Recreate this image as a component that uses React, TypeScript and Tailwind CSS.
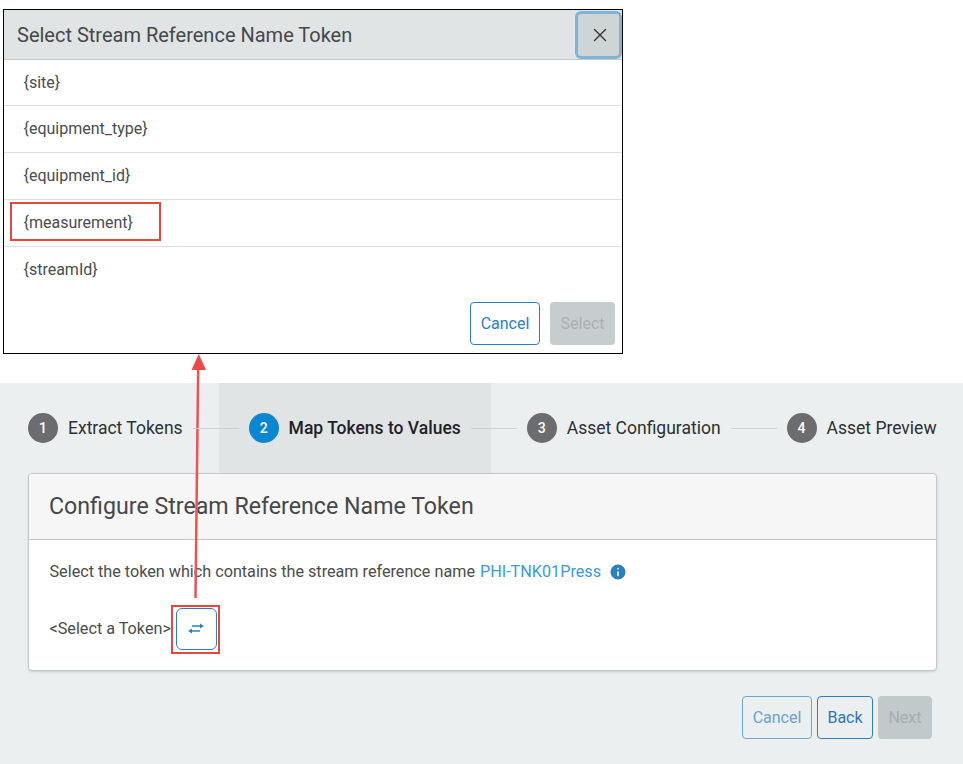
import React from 'react';
import { X, Info } from 'lucide-react';

const tokens = ['{site}', '{equipment_type}', '{equipment_id}', '{measurement}', '{streamId}'];

const steps = [
  { n: 1, label: 'Extract Tokens' },
  { n: 2, label: 'Map Tokens to Values', active: true },
  { n: 3, label: 'Asset Configuration' },
  { n: 4, label: 'Asset Preview' },
];

const SwapIcon = () => (
  <svg width="16" height="11" viewBox="0 0 16 11" fill="none" stroke="#2a80bd" strokeWidth="1.5" className="mb-[2px]">
    <path d="M4 3H13" />
    <path d="M12 0.4L15.8 3L12 5.6Z" fill="#2a80bd" stroke="none" />
    <path d="M3 8H12" />
    <path d="M4 5.4L0.2 8L4 10.6Z" fill="#2a80bd" stroke="none" />
  </svg>
);

const Stepper = () => (
  <div className="flex h-[90px] items-center pl-7">
    {steps.map((s, i) => (
      <React.Fragment key={s.n}>
        {i === 1 && <div className="relative z-10 ml-2.5 mr-[-20px] h-px w-[46px] bg-[#ccd1d3]" />}
        {i === 2 && <div className="relative z-10 ml-[-20px] mr-2.5 h-px w-[46px] bg-[#ccd1d3]" />}
        {i === 3 && <div className="mx-2.5 h-px w-[46px] bg-[#ccd1d3]" />}
        <div className={`flex h-[90px] items-center gap-2.5 ${s.active ? 'bg-[#e1e4e5] px-[30px]' : ''}`}>
          <span className={`flex h-[30px] w-[30px] items-center justify-center rounded-full text-[14px] font-medium text-white ${s.active ? 'bg-[#0a87d0]' : 'bg-[#6b6c6e]'}`}>
            {s.n}
          </span>
          <span className={`text-[17.5px] whitespace-nowrap ${s.active ? 'font-medium text-[#1f2125]' : 'text-[#2c2f33]'}`}>{s.label}</span>
        </div>
      </React.Fragment>
    ))}
  </div>
);

export default function App() {
  return (
    <div className="relative h-[764px] w-[963px] overflow-hidden bg-white font-['Roboto',sans-serif] text-[#4a4c4e]">
      <div className="h-[383px] pl-[3px] pt-[9px]">
        <div className="h-[345px] w-[620px] border border-black bg-white">
          <div className="flex h-[50px] items-center justify-between border-b border-[#c3c8ca] bg-[#e1e4e5] pl-[13px]">
            <h2 className="text-[20px] text-[#45484b]">Select Stream Reference Name Token</h2>
            <button className="flex h-[48px] w-[47px] items-center justify-center rounded-md border-[3px] border-[#80b4d6] bg-[#cfd4d5] pl-[3px] text-[#333]">
              <X size={22} strokeWidth={1.5} />
            </button>
          </div>
          {tokens.map((t, i) => (
            <div key={t} className={`flex items-center pl-[19.5px] text-[16px] ${i === 0 || i === 4 ? 'h-[46px]' : 'h-[47px]'} ${i < tokens.length - 1 ? 'border-b border-[#dcdfe0]' : ''}`}>
              {t}
            </div>
          ))}
          <div className="flex justify-end gap-2.5 pr-[7px] pt-[9px]">
            <button className="h-[43px] w-[70px] rounded border border-[#2a80bd] text-[16px] text-[#2a80bd]">Cancel</button>
            <button className="h-[43px] w-[65px] rounded bg-[#c7cdcf] text-[16px] text-[#a9b1b4]">Select</button>
          </div>
        </div>
      </div>

      <div className="h-[381px] bg-[#eceff0]">
        <Stepper />
        <div className="mx-7 h-[198px] w-[909px] rounded border border-[#c3c8ca] bg-white shadow-sm">
          <div className="flex h-[66px] items-center rounded-t border-b border-[#c3c8ca] bg-[#f6f6f6] pl-5">
            <h3 className="text-[23.2px] text-[#45484b]">Configure Stream Reference Name Token</h3>
          </div>
          <div className="pl-[20.5px] pt-5 text-[16.2px]">
            <div className="flex items-center">
              <span>Select the token which contains the stream reference name</span>
              <span className="ml-[5px] text-[#3a9ad9]">PHI-TNK01Press</span>
              <Info size={20} className="ml-[7px] fill-[#2a80bd] text-white" />
            </div>
            <div className="mt-[24px] flex items-center">
              <span>&lt;Select a Token&gt;</span>
              <button className="ml-[5px] flex h-[42px] w-[41px] items-center justify-center rounded-md border border-[#2a80bd] bg-white">
                <SwapIcon />
              </button>
            </div>
          </div>
        </div>
        <div className="mt-[25px] flex justify-end gap-[5px] pr-[31px] text-[16px]">
          <button className="h-[43px] w-[70px] rounded border border-[#6fa6d2] text-[#6fa0cc]">Cancel</button>
          <button className="h-[43px] w-[56px] rounded border border-[#2a80bd] text-[#2f76b5]">Back</button>
          <button className="h-[43px] w-[54px] rounded bg-[#c1c9cb] text-[#a4aeb0]">Next</button>
        </div>
      </div>

      {/* annotations over the screenshot */}
      <div className="absolute left-[10px] top-[202px] h-[39px] w-[151px] border-2 border-[#e8463f]" />
      <div className="absolute left-[171px] top-[605px] h-[49px] w-[49px] border-2 border-[#e8463f]" />
      <svg className="absolute left-[185px] top-[350px]" width="26" height="250" viewBox="0 0 26 250" fill="none">
        <path d="M10.5 248L13.2 15" stroke="#ec5350" strokeWidth="2.5" />
        <path d="M13.8 4L21 20H6.5Z" fill="#ec4a45" />
      </svg>
    </div>
  );
}
